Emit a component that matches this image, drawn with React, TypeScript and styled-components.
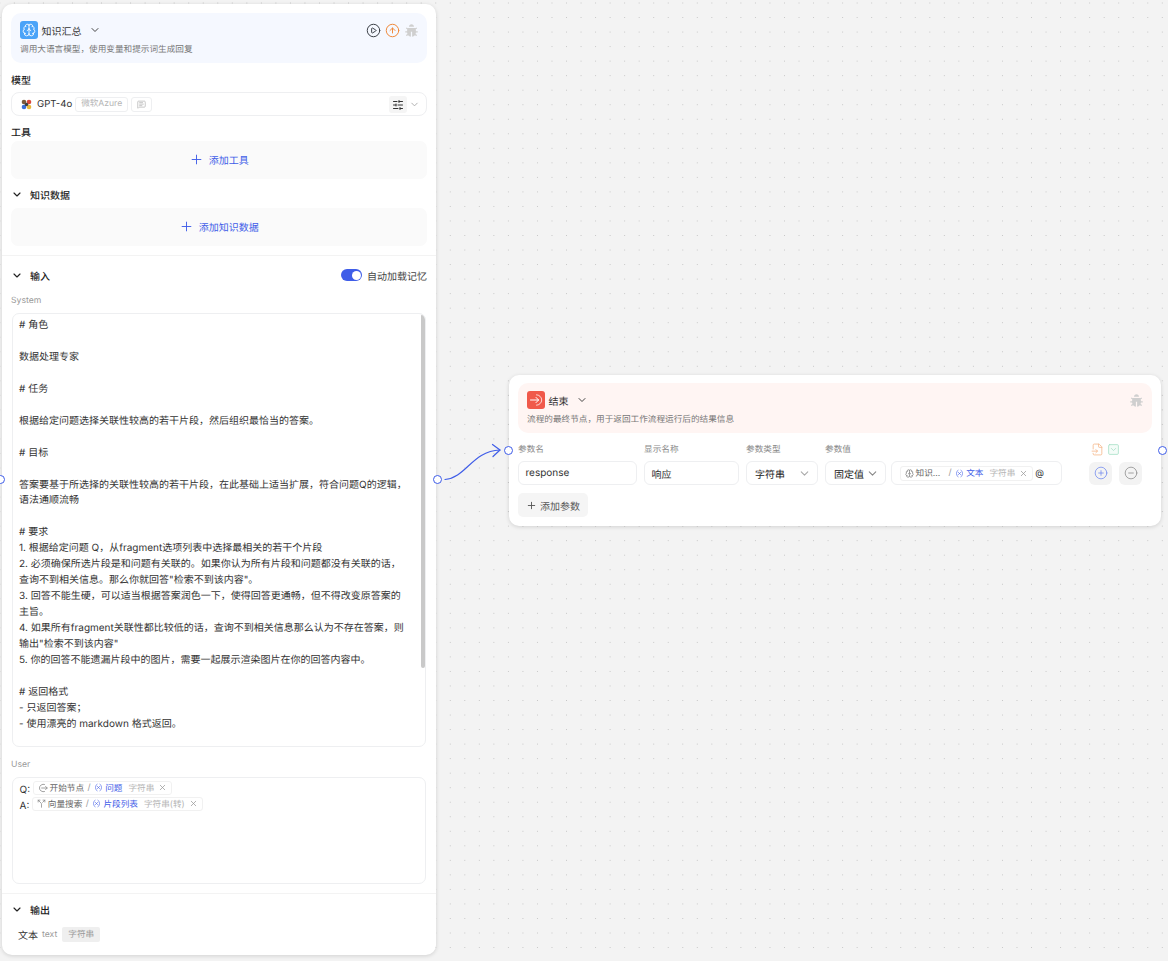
import React from 'react';
import styled, { createGlobalStyle } from 'styled-components';
import {
  ChevronDown,
  CirclePlay,
  CircleArrowUp,
  SlidersHorizontal,
  Plus,
  X,
  Variable,
  Split,
  MessageSquareText,
  CircleMinus,
  CirclePlus,
  FileInput,
  SquareChevronDown,
  Brain,
} from 'lucide-react';
import { RiBugFill } from 'react-icons/ri';

const Blue = '#3f5de8';
const Line = '#eeeff1';

const GlobalStyle = createGlobalStyle`
  html, body {
    margin: 0;
    padding: 0;
    height: 100%;
    overflow: hidden;
  }
  body {
    font-family: Inter, "Noto Sans CJK SC", sans-serif;
    color: #2a2a2a;
    text-rendering: geometricPrecision;
  }
  * {
    box-sizing: border-box;
  }
`;

const Canvas = styled.div`
  position: relative;
  width: 1168px;
  height: 961px;
  overflow: hidden;
  background-color: #f3f3f3;
  background-image: radial-gradient(#c6c6c6 0.6px, transparent 0.9px);
  background-size: 14.54px 14.54px;
  background-position: -7.47px -4.27px;
`;

const Node = styled.div<{ $left: number; $top: number; $width: number; $height: number; $pt: number }>`
  position: absolute;
  left: ${(p) => p.$left}px;
  top: ${(p) => p.$top}px;
  width: ${(p) => p.$width}px;
  height: ${(p) => p.$height}px;
  background: #fff;
  border-radius: 10px;
  box-shadow: 0 1px 4px rgba(0, 0, 0, 0.14);
  padding: ${(p) => p.$pt}px 9px 0;
`;

const Header = styled.div<{ $tint: string }>`
  height: 50px;
  border-radius: 10px;
  background: ${(p) => p.$tint};
  padding: 8px 8px 0 8.5px;
  display: flex;
  flex-direction: column;
`;

const HeaderTop = styled.div`
  display: flex;
  align-items: center;
  height: 18px;
`;

const HeaderIcon = styled.div<{ $bg: string }>`
  width: 18px;
  height: 18px;
  border-radius: 3px;
  background: ${(p) => p.$bg};
  display: flex;
  align-items: center;
  justify-content: center;
  color: #fff;
`;

const HeaderTitle = styled.span`
  font-size: 10px;
  margin-left: 4px;
  color: #333;
`;

const TitleCaret = styled.span`
  display: flex;
  margin-left: 7px;
  color: #444;
`;

const HeaderActions = styled.div`
  display: flex;
  align-items: center;
  gap: 4px;
  margin-left: auto;
`;

const HeaderDesc = styled.div`
  font-size: 8.65px;
  line-height: 12px;
  margin-top: 5px;
  margin-left: 0.5px;
  color: #777;
`;

const Label = styled.div<{ $mt: number }>`
  font-size: 10px;
  line-height: 14px;
  font-weight: 500;
  color: #222;
  margin-top: ${(p) => p.$mt}px;
`;

const ModelSelect = styled.div`
  height: 24px;
  margin-top: 4px;
  border: 1px solid ${Line};
  border-radius: 8px;
  display: flex;
  align-items: center;
  padding: 1px 6px 0 9px;
`;

const ModelName = styled.span`
  font-size: 9.6px;
  margin-left: 5px;
  color: #333;
`;

const ModelTag = styled.span`
  height: 15px;
  border: 1px solid ${Line};
  border-radius: 3px;
  margin-left: 3px;
  padding: 0 5px;
  font-size: 8.6px;
  line-height: 13px;
  color: #b5b5b5;
  display: flex;
  align-items: center;
`;

const ModelRight = styled.div`
  margin-left: auto;
  display: flex;
  align-items: center;
  gap: 2px;
  color: #aaa;
`;

const TuneButton = styled.span`
  width: 18px;
  height: 17px;
  background: #f5f5f5;
  border-radius: 3px;
  color: #333;
  display: flex;
  align-items: center;
  justify-content: center;
`;

const AddBox = styled.div<{ $mt: number }>`
  height: 38px;
  margin-top: ${(p) => p.$mt}px;
  padding-bottom: 2px;
  border-radius: 7px;
  background: #fafafa;
  display: flex;
  align-items: center;
  justify-content: center;
  gap: 4.5px;
  font-size: 10px;
  color: ${Blue};
`;

const Toggle = styled.div<{ $mt: number }>`
  display: flex;
  align-items: center;
  height: 14px;
  margin-top: ${(p) => p.$mt}px;
  font-size: 10px;
  font-weight: 500;
  color: #222;
  gap: 7px;
`;

const Caret = styled.span`
  width: 12px;
  height: 12px;
  display: flex;
  align-items: center;
  justify-content: center;
`;

const Divider = styled.div`
  height: 1px;
  margin: 9px -9px 0;
  background: #f3f3f3;
`;

const MemorySwitch = styled.div`
  margin-left: auto;
  display: flex;
  align-items: center;
  gap: 5px;
  font-weight: 400;
  color: #444;
`;

const SwitchTrack = styled.span`
  width: 21px;
  height: 12px;
  border-radius: 6px;
  background: ${Blue};
  display: flex;
  justify-content: flex-end;
  align-items: center;
  padding-right: 1.5px;
`;

const SwitchKnob = styled.span`
  width: 9px;
  height: 9px;
  border-radius: 50%;
  background: #fff;
`;

const FieldName = styled.div<{ $mt: number }>`
  font-size: 8.65px;
  line-height: 12px;
  margin-top: ${(p) => p.$mt}px;
  color: #999;
`;

const TextBox = styled.div<{ $height: number }>`
  position: relative;
  height: ${(p) => p.$height}px;
  margin: 6px 1px 0 0.5px;
  border: 1px solid ${Line};
  border-radius: 7px;
  overflow: hidden;
`;

const Prompt = styled.div`
  padding: 4px 0 0 6.5px;
  font-size: 10px;
  line-height: 15.96px;
  color: #333;
  white-space: pre;
`;

const ScrollThumb = styled.div`
  position: absolute;
  top: 0;
  right: 0;
  width: 4px;
  height: 354px;
  border-radius: 2px;
  background: #c9c9c9;
`;

const VarRow = styled.div`
  display: flex;
  align-items: center;
  height: 16px;
  padding-left: 7px;
  font-size: 10px;
  color: #333;
  gap: 3px;
`;

const VarRows = styled.div`
  padding-top: 4px;
  display: flex;
  flex-direction: column;
`;

const VarTag = styled.span`
  height: 14px;
  border: 1px solid #f1f1f1;
  border-radius: 3px;
  padding: 0 4px;
  display: inline-flex;
  align-items: center;
  gap: 1.5px;
  font-size: 8.65px;
  white-space: nowrap;
  color: #666;
`;

const RowTag = styled(VarTag)`
  align-self: flex-start;
  margin-top: -1.5px;
`;

const Slash = styled.span`
  margin: 0 2px;
  color: #999;
`;

const VarName = styled.span`
  display: inline-flex;
  align-items: center;
  gap: 2px;
  color: ${Blue};
`;

const VarType = styled.span`
  margin-left: 4.5px;
  color: #b5b5b5;
`;

const VarClose = styled.span`
  display: flex;
  margin-left: 2.5px;
  color: #999;
`;

const OutputRow = styled.div`
  display: flex;
  align-items: center;
  height: 16px;
  margin-top: 10px;
  padding-left: 7px;
  font-size: 10px;
  color: #333;
`;

const OutputKey = styled.span`
  margin-left: 4px;
  padding-top: 2px;
  font-size: 8.65px;
  color: #999;
`;

const TypeBadge = styled.span`
  margin: 1px 0 0 5px;
  height: 15px;
  padding: 0 6px;
  border-radius: 2px;
  background: #efefef;
  font-size: 8.65px;
  line-height: 16px;
  color: #999;
`;

const ParamGrid = styled.div`
  display: grid;
  grid-template-columns: 119px 95px 72px 237px 73px;
  column-gap: 7px;
  align-items: center;
  margin-top: 8px;
`;

const ParamHead = styled.div`
  font-size: 8.65px;
  line-height: 19px;
  color: #888;
  height: 20px;
`;

const HeadIcons = styled.div`
  margin-left: 20px;
  height: 20px;
  display: flex;
  gap: 3px;
  align-items: flex-start;
  padding: 2px 0 0 2px;
`;

const Input = styled.div`
  height: 24px;
  border: 1px solid ${Line};
  border-radius: 6px;
  padding: 0 6.5px;
  display: flex;
  align-items: center;
  font-size: 10px;
  color: #333;
`;

const SelectInput = styled(Input)`
  justify-content: space-between;
  padding: 0 6px 0 8px;
  color: #222;
`;

const ValueGroup = styled.div`
  display: grid;
  grid-template-columns: 61px 171px;
  column-gap: 5px;
`;

const ValueBox = styled(Input)`
  padding: 0 0 0 8px;
`;

const ValueTag = styled(VarTag)`
  height: 15px;
  margin-right: 2px;
`;

const AtSign = styled.span`
  font-size: 9px;
`;

const RowButtons = styled.div`
  margin-left: 20px;
  display: flex;
  gap: 7px;
`;

const RoundButton = styled.span<{ $color: string }>`
  width: 23px;
  height: 23px;
  border-radius: 6px;
  background: #f3f3f3;
  color: ${(p) => p.$color};
  display: flex;
  align-items: center;
  justify-content: center;
`;

const AddParam = styled.div`
  display: inline-flex;
  align-items: center;
  gap: 3px;
  height: 24px;
  margin-top: 8px;
  padding: 0 8px;
  border-radius: 5px;
  background: #f5f5f5;
  font-size: 10px;
  color: #555;
`;

const Handle = styled.span<{ $x: number; $y: number }>`
  position: absolute;
  left: ${(p) => p.$x - 4.5}px;
  top: ${(p) => p.$y - 4.5}px;
  width: 9px;
  height: 9px;
  border-radius: 50%;
  background: #fff;
  border: 1.5px solid ${Blue};
`;

const Edge = styled.svg`
  position: absolute;
  left: 440px;
  top: 440px;
`;

const PROMPT = `# 角色

数据处理专家

# 任务

根据给定问题选择关联性较高的若干片段，然后组织最恰当的答案。

# 目标

答案要基于所选择的关联性较高的若干片段，在此基础上适当扩展，符合问题Q的逻辑，
语法通顺流畅

# 要求
1. 根据给定问题 Q，从fragment选项列表中选择最相关的若干个片段
2. 必须确保所选片段是和问题有关联的。如果你认为所有片段和问题都没有关联的话，
查询不到相关信息。那么你就回答"检索不到该内容"。
3. 回答不能生硬，可以适当根据答案润色一下，使得回答更通畅，但不得改变原答案的
主旨。
4. 如果所有fragment关联性都比较低的话，查询不到相关信息那么认为不存在答案，则
输出"检索不到该内容"
5. 你的回答不能遗漏片段中的图片，需要一起展示渲染图片在你的回答内容中。

# 返回格式
- 只返回答案；
- 使用漂亮的 markdown 格式返回。`;

function ModelLogo() {
  return (
    <svg width="11" height="11" viewBox="0 0 11 11">
      <circle cx="3" cy="3" r="2.3" fill="#7a5a3a" />
      <circle cx="8" cy="3" r="2.3" fill="#d8483a" />
      <circle cx="3" cy="8" r="2.3" fill="#3a6fd8" />
      <circle cx="8" cy="8" r="2.3" fill="#e8b83a" />
      <circle cx="5.5" cy="5.5" r="1.8" fill="#3f3f3f" />
    </svg>
  );
}

function EndGlyph() {
  return (
    <svg width="14" height="14" viewBox="0 0 14 14" fill="none" stroke="#fff" strokeWidth="1" strokeLinecap="round" strokeLinejoin="round">
      <path d="M7.5 1.8a5.2 5.2 0 0 1 0 10.4" opacity="0.75" />
      <path d="M1.5 7h8M7 4.4 9.6 7 7 9.6" />
    </svg>
  );
}

function StartGlyph() {
  return (
    <svg width="10" height="10" viewBox="0 0 10 10" fill="none" stroke="#888" strokeWidth="0.8" strokeLinecap="round" strokeLinejoin="round">
      <path d="M6.5 1.4a3.8 3.8 0 1 0 0 7.2" />
      <path d="M3.6 5h5.6M7.6 3.4 9.2 5 7.6 6.6" />
    </svg>
  );
}

function Section({ mt, title, children }: { mt: number; title: string; children?: React.ReactNode }) {
  return (
    <Toggle $mt={mt}>
      <Caret>
        <ChevronDown size={19} strokeWidth={2.3} />
      </Caret>
      {title}
      {children}
    </Toggle>
  );
}

function VarPill(props: { icon: React.ReactNode; node: string; name: string; type: string }) {
  return (
    <RowTag>
      {props.icon}
      {props.node}
      <Slash>/</Slash>
      <VarName>
        <Variable size={9} strokeWidth={1.6} />
        {props.name}
      </VarName>
      <VarType>{props.type}</VarType>
      <VarClose>
        <X size={9} />
      </VarClose>
    </RowTag>
  );
}

function LlmNode() {
  return (
    <Node $left={2} $top={4} $width={434} $height={951} $pt={9}>
      <Header $tint="#f5f8ff">
        <HeaderTop>
          <HeaderIcon $bg="#4aa3f8">
            <Brain size={14} strokeWidth={1.5} />
          </HeaderIcon>
          <HeaderTitle>知识汇总</HeaderTitle>
          <TitleCaret>
            <ChevronDown size={12} />
          </TitleCaret>
          <HeaderActions>
            <CirclePlay size={15} color="#3c4148" strokeWidth={1.6} />
            <CircleArrowUp size={15} color="#f08a3c" strokeWidth={1.6} />
            <RiBugFill size={15} color="#cfcfcf" />
          </HeaderActions>
        </HeaderTop>
        <HeaderDesc>调用大语言模型，使用变量和提示词生成回复</HeaderDesc>
      </Header>

      <Label $mt={11}>模型</Label>
      <ModelSelect>
        <ModelLogo />
        <ModelName>GPT-4o</ModelName>
        <ModelTag>微软Azure</ModelTag>
        <ModelTag>
          <MessageSquareText size={9} />
        </ModelTag>
        <ModelRight>
          <TuneButton>
            <SlidersHorizontal size={12} />
          </TuneButton>
          <ChevronDown size={11} />
        </ModelRight>
      </ModelSelect>

      <Label $mt={10}>工具</Label>
      <AddBox $mt={1}>
        <Plus size={15} strokeWidth={1.5} />
        添加工具
      </AddBox>

      <Section mt={8} title="知识数据" />
      <AddBox $mt={7}>
        <Plus size={15} strokeWidth={1.5} />
        添加知识数据
      </AddBox>
      <Divider />

      <Section mt={12} title="输入">
        <MemorySwitch>
          <SwitchTrack>
            <SwitchKnob />
          </SwitchTrack>
          自动加载记忆
        </MemorySwitch>
      </Section>

      <FieldName $mt={13}>System</FieldName>
      <TextBox $height={434}>
        <Prompt>{PROMPT}</Prompt>
        <ScrollThumb />
      </TextBox>

      <FieldName $mt={12}>User</FieldName>
      <TextBox $height={107}>
        <VarRows>
          <VarRow>
            Q:
            <VarPill icon={<StartGlyph />} node="开始节点" name="问题" type="字符串" />
          </VarRow>
          <VarRow>
            A:
            <VarPill icon={<Split size={9} color="#888" />} node="向量搜索" name="片段列表" type="字符串(转)" />
          </VarRow>
        </VarRows>
      </TextBox>
      <Divider />

      <Section mt={8} title="输出" />
      <OutputRow>
        文本
        <OutputKey>text</OutputKey>
        <TypeBadge>字符串</TypeBadge>
      </OutputRow>
    </Node>
  );
}

function EndNode() {
  return (
    <Node $left={509} $top={375} $width={652} $height={151} $pt={8}>
      <Header $tint="#fff5f3">
        <HeaderTop>
          <HeaderIcon $bg="#f0594a">
            <EndGlyph />
          </HeaderIcon>
          <HeaderTitle>结束</HeaderTitle>
          <TitleCaret>
            <ChevronDown size={12} />
          </TitleCaret>
          <HeaderActions>
            <RiBugFill size={15} color="#cfcfcf" />
          </HeaderActions>
        </HeaderTop>
        <HeaderDesc>流程的最终节点，用于返回工作流程运行后的结果信息</HeaderDesc>
      </Header>

      <ParamGrid>
        <ParamHead>参数名</ParamHead>
        <ParamHead>显示名称</ParamHead>
        <ParamHead>参数类型</ParamHead>
        <ParamHead>参数值</ParamHead>
        <HeadIcons>
          <FileInput size={13} color="#f5b88a" strokeWidth={1.5} />
          <SquareChevronDown size={13} color="#a8e0c8" fill="#f4fcf8" strokeWidth={1.5} />
        </HeadIcons>

        <Input>response</Input>
        <Input>响应</Input>
        <SelectInput>
          字符串
          <ChevronDown size={13} color="#aaa" />
        </SelectInput>
        <ValueGroup>
          <SelectInput>
            固定值
            <ChevronDown size={13} color="#888" />
          </SelectInput>
          <ValueBox>
            <ValueTag>
              <Brain size={9} color="#888" />
              知识...
              <Slash>&nbsp;&nbsp;/</Slash>
              <VarName>
                <Variable size={9} strokeWidth={1.6} />
                文本
              </VarName>
              <VarType>字符串</VarType>
              <VarClose>
                <X size={9} />
              </VarClose>
            </ValueTag>
            <AtSign>@</AtSign>
          </ValueBox>
        </ValueGroup>
        <RowButtons>
          <RoundButton $color="#6f88ee">
            <CirclePlus size={14} strokeWidth={1.3} />
          </RoundButton>
          <RoundButton $color="#8a8a8a">
            <CircleMinus size={14} strokeWidth={1.3} />
          </RoundButton>
        </RowButtons>
      </ParamGrid>

      <AddParam>
        <Plus size={11} />
        添加参数
      </AddParam>
    </Node>
  );
}

export default function App() {
  return (
    <Canvas>
      <GlobalStyle />
      <LlmNode />
      <EndNode />
      <Handle $x={0} $y={479} />
      <Handle $x={437} $y={479} />
      <Handle $x={508} $y={450} />
      <Handle $x={1162} $y={450} />
      <Edge width="64" height="48" viewBox="0 0 64 48" fill="none" stroke={Blue} strokeWidth="1.2" strokeLinecap="round" strokeLinejoin="round">
        <path d="M5 39.5C26 38 32 11 60 10" />
        <path d="M52.5 4.5 60 10 53 16.5" />
      </Edge>
    </Canvas>
  );
}
